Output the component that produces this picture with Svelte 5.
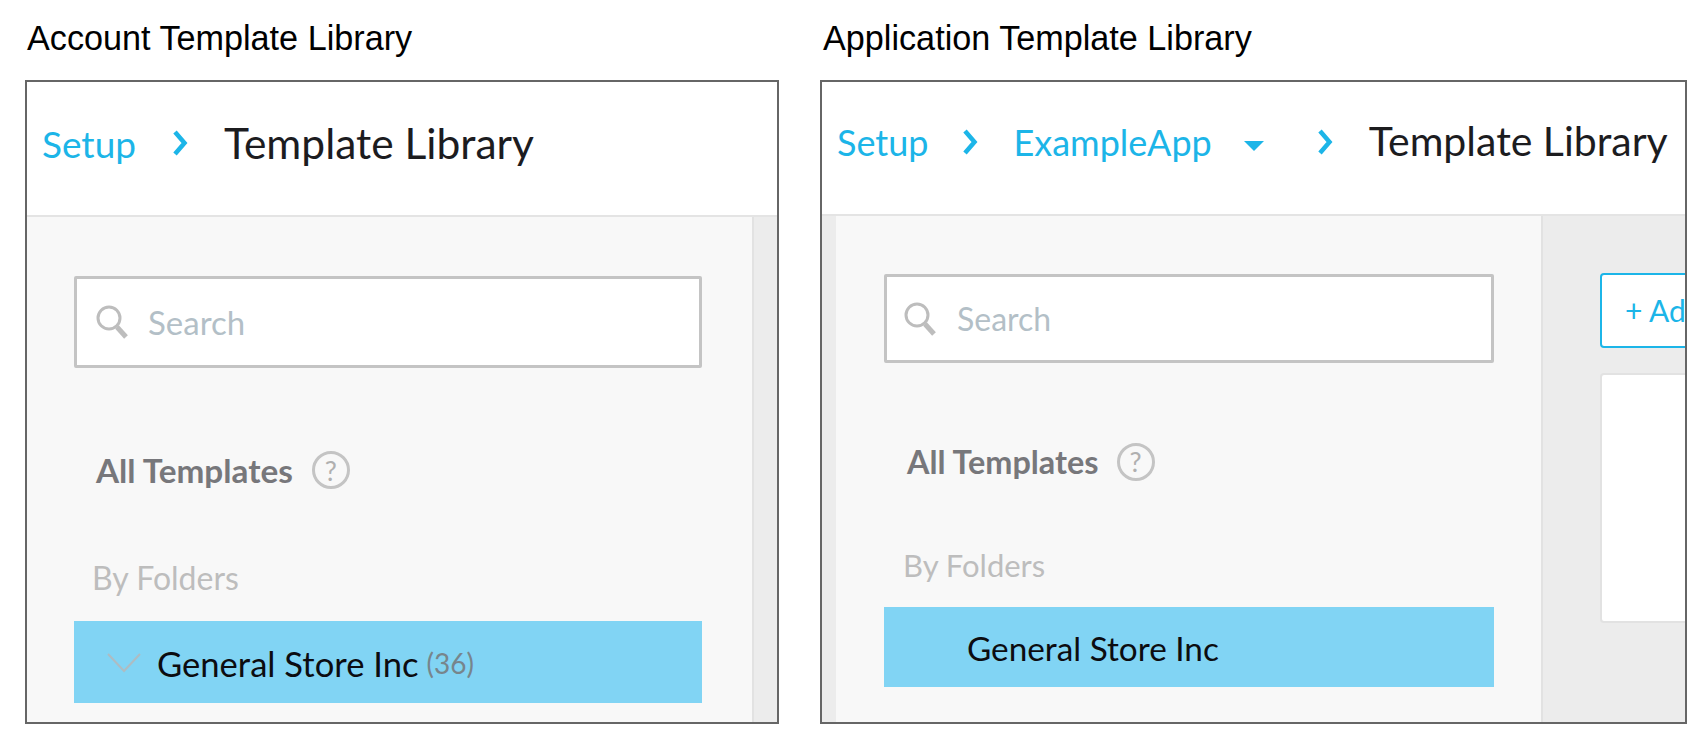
<script>
  const help = "?";
</script>

<div class="page">
  <section class="panel left">
    <h2 class="label">Account Template Library</h2>
    <div class="frame">
      <header class="top">
        <span class="link setup">Setup</span>
        <svg class="chev c1" viewBox="0 0 16 26"><path d="M3 2 L12.5 13 L3 24" /></svg>
        <span class="title">Template Library</span>
      </header>
      <div class="body">
        <aside class="side">
          <div class="search">
            <svg class="mag" viewBox="0 0 32 34"><circle cx="13" cy="13" r="11" /><path d="M21 22 L30 32" class="handle" /></svg>
            <span class="ph">Search</span>
          </div>
          <div class="all">
            <span class="alltext">All Templates</span>
            <span class="help">{help}</span>
          </div>
          <div class="by">By Folders</div>
          <div class="row">
            <svg class="down" viewBox="0 0 34 20"><path d="M1 1 L17 18 L33 1" /></svg>
            <span class="name">General Store Inc</span>
            <span class="count">(36)</span>
          </div>
        </aside>
        <div class="rest"></div>
      </div>
    </div>
  </section>

  <section class="panel right">
    <h2 class="label">Application Template Library</h2>
    <div class="frame">
      <header class="top">
        <span class="link setup">Setup</span>
        <svg class="chev c1" viewBox="0 0 16 26"><path d="M3 2 L12.5 13 L3 24" /></svg>
        <span class="link app">ExampleApp</span>
        <svg class="caret" viewBox="0 0 20 10"><path d="M0 0 H20 L10 10 Z" /></svg>
        <svg class="chev c2" viewBox="0 0 16 26"><path d="M3 2 L12.5 13 L3 24" /></svg>
        <span class="title">Template Library</span>
      </header>
      <div class="body">
        <div class="strip"></div>
        <aside class="side">
          <div class="search">
            <svg class="mag" viewBox="0 0 32 34"><circle cx="13" cy="13" r="11" /><path d="M21 22 L30 32" class="handle" /></svg>
            <span class="ph">Search</span>
          </div>
          <div class="all">
            <span class="alltext">All Templates</span>
            <span class="help">{help}</span>
          </div>
          <div class="by">By Folders</div>
          <div class="row">
            <span class="name">General Store Inc</span>
          </div>
        </aside>
        <div class="rest">
          <div class="add">+ Add</div>
          <div class="card"></div>
        </div>
      </div>
    </div>
  </section>
</div>

<style>
  :global(body) {
    margin: 0;
    background: #fff;
  }
  .page {
    display: flex;
    width: 1706px;
    height: 752px;
    overflow: hidden;
    box-sizing: border-box;
    padding-left: 25px;
    gap: 41px;
    font-family: "Lato", "Noto Sans", sans-serif;
  }
  .panel { display: flex; flex-direction: column; }
  .left { width: 754px; }
  .right { width: 867px; }
  .label {
    margin: 0;
    height: 80px;
    box-sizing: border-box;
    padding: 19px 0 0 2px;
    font: 400 34.2px/38px "Liberation Sans", Arial, sans-serif;
    color: #000;
  }
  .right .label { padding-left: 3px; }
  .frame {
    width: 100%;
    height: 644px;
    box-sizing: border-box;
    border: 2px solid #666;
    display: flex;
    flex-direction: column;
    overflow: hidden;
  }
  .top {
    display: flex;
    align-items: center;
    height: 135px;
    flex: none;
    box-sizing: border-box;
    background: #fff;
    border-bottom: 2px solid #e4e4e4;
    padding-bottom: 11px;
    font-size: 37px;
  }
  .right .top { height: 134px; padding-bottom: 13px; font-size: 36px; }
  .link { color: #1cb5e8; white-space: nowrap; }
  .title { color: #1c1c1f; white-space: nowrap; }
  .left .title { font-size: 42.5px; margin-bottom: 2px; }
  .right .title { font-size: 41px; margin-bottom: 2px; }
  .left .setup { margin-left: 15px; }
  .right .setup { margin-left: 15px; }
  .chev { width: 16px; height: 26px; flex: none; fill: none; stroke: #1cb5e8; stroke-width: 4.5; }
  .left .c1 { margin-left: 36px; }
  .left .title { margin-left: 36px; }
  .right .c1 { margin-left: 34px; }
  .right .app { margin-left: 35px; }
  .caret { width: 20px; height: 10px; flex: none; margin-left: 32px; margin-top: 8px; fill: #1cb5e8; }
  .right .c2 { margin-left: 53px; }
  .right .title { margin-left: 36px; }
  .body { display: flex; flex: 1; min-height: 0; background: #ececec; }
  .strip { width: 14px; flex: none; }
  .side {
    background: #f8f8f8;
    border-right: 2px solid #e2e2e2;
    box-sizing: border-box;
    padding-left: 47px;
    flex: none;
  }
  .left .side { width: 727px; padding-top: 59px; }
  .right .side { width: 707px; padding-left: 48px; padding-top: 58px; }
  .search {
    display: flex;
    align-items: center;
    box-sizing: border-box;
    background: #fff;
    border: 3px solid #c4c4c4;
    border-radius: 2px;
    height: 92px;
    width: 628px;
  }
  .right .search { height: 89px; width: 610px; }
  .mag { width: 32px; height: 34px; margin-left: 19px; flex: none; fill: none; stroke: #bdbdbd; stroke-width: 3; }
  .handle { stroke-width: 5; }
  .right .mag { margin-left: 17px; }
  .ph { color: #b3bfc7; font-size: 33px; margin-left: 20px; }
  .right .ph { margin-left: 21px; font-size: 32px; }
  .all { display: flex; align-items: center; margin-left: 22px; }
  .left .all { margin-top: 82px; }
  .right .all { margin-top: 79px; margin-left: 23px; }
  .alltext { color: #77777b; font-weight: 700; }
  .left .alltext { font-size: 33.3px; }
  .right .alltext { font-size: 32.4px; }
  .help {
    width: 38px;
    height: 38px;
    box-sizing: border-box;
    margin-left: 19px;
    border: 3px solid #c4c4c4;
    border-radius: 50%;
    display: flex;
    align-items: center;
    justify-content: center;
    color: #b0b0b0;
    font-size: 27px;
  }
  .right .help { margin-left: 18px; }
  .by { color: #bdbdbd; font-size: 32px; margin-left: 18px; }
  .left .by { margin-top: 68px; }
  .right .by { margin-top: 65px; margin-left: 19px; font-size: 31px; }
  .row {
    display: flex;
    align-items: center;
    background: #81d4f4;
    box-sizing: border-box;
  }
  .left .row { width: 628px; height: 82px; margin-top: 24px; padding-top: 2px; }
  .right .row { width: 610px; height: 80px; margin-top: 23px; padding-top: 1px; }
  .down { width: 34px; height: 20px; margin-left: 33px; flex: none; fill: none; stroke: #aebcc2; stroke-width: 2; }
  .name { color: #0c0c10; white-space: nowrap; }
  .left .name { margin-left: 16px; font-size: 34.6px; }
  .right .name { margin-left: 83px; font-size: 33.3px; }
  .count { color: #77858c; font-size: 28px; margin-left: 8px; }
  .rest { flex: 1; min-width: 0; overflow: hidden; padding-left: 57px; padding-top: 57px; }
  .add {
    width: 220px;
    height: 75px;
    box-sizing: border-box;
    border: 2px solid #1cb5e8;
    border-radius: 4px;
    background: #fff;
    color: #1cb5e8;
    font-size: 30px;
    line-height: 71px;
    padding-left: 23px;
    white-space: nowrap;
  }
  .card {
    width: 220px;
    height: 250px;
    margin-top: 25px;
    box-sizing: border-box;
    background: #fff;
    border: 2px solid #e2e2e2;
    border-radius: 4px;
  }
</style>
